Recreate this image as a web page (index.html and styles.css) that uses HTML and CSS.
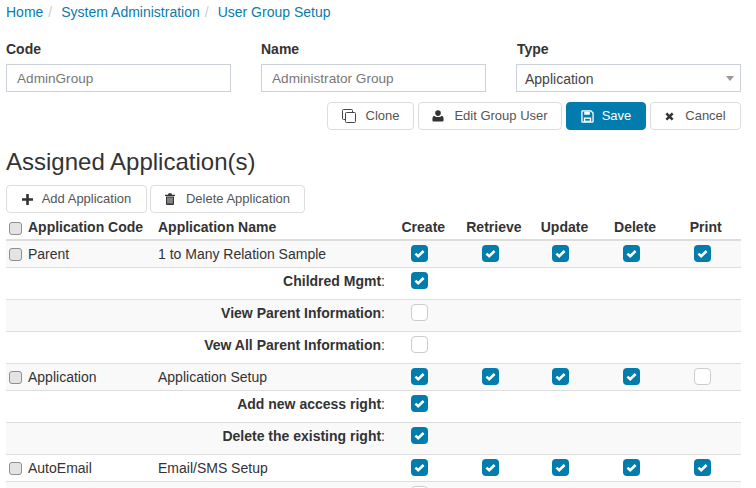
FILE: index.html
```html
<!DOCTYPE html>
<html>
<head>
  <title>User Group Setup</title>
  <link rel="stylesheet" href="styles.css">
</head>
<body>
  <svg class="defs" width="0" height="0">
    <symbol id="tick" viewBox="0 0 17 17">
      <path d="M4.400 8.600l2.800 2.600 5.400-5.200" fill="none" stroke="#fff" stroke-width="2.600"/>
    </symbol>
  </svg>

  <ul class="crumbs">
    <li><a href="#">Home</a></li>
    <li><a href="#">System Administration</a></li>
    <li><a href="#">User Group Setup</a></li>
  </ul>

  <div class="form-row">
    <div class="field">
      <label>Code</label>
      <div class="input">AdminGroup</div>
    </div>
    <div class="field">
      <label>Name</label>
      <div class="input">Administrator Group</div>
    </div>
    <div class="field field-type">
      <label>Type</label>
      <div class="select">Application<span class="caret"></span></div>
    </div>
  </div>

  <div class="actions">
    <button class="btn btn-clone">
      <svg class="icon ic-clone" viewBox="0 0 14 14"><path d="M3.500 10.500h-2a1 1 0 0 1-1-1v-8a1 1 0 0 1 1-1h8a1 1 0 0 1 1 1v2" fill="none" stroke="#444"/><rect x="3.500" y="3.500" width="10" height="10" rx="1" fill="none" stroke="#444"/></svg>
      Clone
    </button>
    <button class="btn btn-edit">
      <svg class="icon ic-user" viewBox="0 0 14 14"><circle cx="7" cy="3.600" r="3.300" fill="#333"/><path d="M2.400 6.600c.9.9 2.700 1.500 4.600 1.500s3.700-.6 4.600-1.500c1.400.4 1.900 1.900 1.900 4.400v1c0 1-.7 1.500-1.500 1.500H2c-.8 0-1.500-.5-1.500-1.500v-1c0-2.500.5-4 1.900-4.400z" fill="#333"/></svg>
      Edit Group User
    </button>
    <button class="btn btn-primary btn-save">
      <svg class="icon ic-save" viewBox="0 0 14 14"><path d="M1.500 1h9.300l2.200 2.200v9.300a.5.500 0 0 1-.5.5h-11a.5.500 0 0 1-.5-.5v-11a.5.500 0 0 1 .5-.5z" fill="none" stroke="#fff" stroke-width="1.400"/><path d="M3.500 1.500h6v3.500h-6zM3 8h8v5H3z" fill="#fff"/><rect x="4.500" y="9.500" width="5" height="2" fill="#017cad"/></svg>
      Save
    </button>
    <button class="btn btn-cancel">
      <svg class="icon ic-cancel" viewBox="0 0 10 10"><path d="M1.500 1.500l7 7M8.500 1.500l-7 7" fill="none" stroke="#333" stroke-width="2.800"/></svg>
      Cancel
    </button>
  </div>

  <h3 class="section-title">Assigned Application(s)</h3>

  <div class="toolbar">
    <button class="btn btn-add">
      <svg class="icon ic-plus" viewBox="0 0 11 11"><path d="M5.500 0v11M0 5.500h11" fill="none" stroke="#333" stroke-width="2.600"/></svg>
      Add Application
    </button>
    <button class="btn btn-delete">
      <svg class="icon ic-trash" viewBox="0 0 10 12"><path d="M0 1.800h10v1.100H0zM3 1.800L3.600.3h2.800L7 1.800" fill="#333"/><path d="M1 3.400h8v7.600a1 1 0 0 1-1 1H2a1 1 0 0 1-1-1z" fill="#333"/><path d="M3 4.500v6M5 4.500v6M7 4.500v6" stroke="#fff" stroke-width=".8"/></svg>
      Delete Application
    </button>
  </div>

  <table class="rights">
    <colgroup>
      <col class="col-code"><col class="col-name">
      <col class="col-flag"><col class="col-flag"><col class="col-flag"><col class="col-flag"><col class="col-flag">
    </colgroup>
    <thead>
      <tr>
        <th><span class="box box-head"></span>Application Code</th>
        <th class="name">Application Name</th>
        <th class="flag">Create</th>
        <th class="flag">Retrieve</th>
        <th class="flag">Update</th>
        <th class="flag">Delete</th>
        <th class="flag">Print</th>
      </tr>
    </thead>
    <tbody>
      <tr class="app odd">
        <td><span class="box"></span>Parent</td>
        <td class="name">1 to Many Relation Sample</td>
        <td class="flag"><span class="chk on"><svg><use href="#tick"/></svg></span></td>
        <td class="flag"><span class="chk on"><svg><use href="#tick"/></svg></span></td>
        <td class="flag"><span class="chk on"><svg><use href="#tick"/></svg></span></td>
        <td class="flag"><span class="chk on"><svg><use href="#tick"/></svg></span></td>
        <td class="flag"><span class="chk on"><svg><use href="#tick"/></svg></span></td>
      </tr>
      <tr class="sub">
        <td class="sub-label" colspan="2"><b>Childred Mgmt</b>:</td>
        <td class="flag"><span class="chk on"><svg><use href="#tick"/></svg></span></td>
        <td colspan="4"></td>
      </tr>
      <tr class="sub odd">
        <td class="sub-label" colspan="2"><b>View Parent Information</b>:</td>
        <td class="flag"><span class="chk"></span></td>
        <td colspan="4"></td>
      </tr>
      <tr class="sub">
        <td class="sub-label" colspan="2"><b>Vew All Parent Information</b>:</td>
        <td class="flag"><span class="chk"></span></td>
        <td colspan="4"></td>
      </tr>
      <tr class="app odd">
        <td><span class="box"></span>Application</td>
        <td class="name">Application Setup</td>
        <td class="flag"><span class="chk on"><svg><use href="#tick"/></svg></span></td>
        <td class="flag"><span class="chk on"><svg><use href="#tick"/></svg></span></td>
        <td class="flag"><span class="chk on"><svg><use href="#tick"/></svg></span></td>
        <td class="flag"><span class="chk on"><svg><use href="#tick"/></svg></span></td>
        <td class="flag"><span class="chk"></span></td>
      </tr>
      <tr class="sub">
        <td class="sub-label" colspan="2"><b>Add new access right</b>:</td>
        <td class="flag"><span class="chk on"><svg><use href="#tick"/></svg></span></td>
        <td colspan="4"></td>
      </tr>
      <tr class="sub odd">
        <td class="sub-label" colspan="2"><b>Delete the existing right</b>:</td>
        <td class="flag"><span class="chk on"><svg><use href="#tick"/></svg></span></td>
        <td colspan="4"></td>
      </tr>
      <tr class="app">
        <td><span class="box"></span>AutoEmail</td>
        <td class="name">Email/SMS Setup</td>
        <td class="flag"><span class="chk on"><svg><use href="#tick"/></svg></span></td>
        <td class="flag"><span class="chk on"><svg><use href="#tick"/></svg></span></td>
        <td class="flag"><span class="chk on"><svg><use href="#tick"/></svg></span></td>
        <td class="flag"><span class="chk on"><svg><use href="#tick"/></svg></span></td>
        <td class="flag"><span class="chk on"><svg><use href="#tick"/></svg></span></td>
      </tr>
      <tr class="sub odd">
        <td class="sub-label" colspan="2"></td>
        <td class="flag"><span class="chk"></span></td>
        <td colspan="4"></td>
      </tr>
    </tbody>
  </table>
</body>
</html>
```
FILE: styles.css
```css
html, body {
  height: 100%;
  overflow: hidden;
}
body {
  font-family: "Liberation Sans", Arial, sans-serif;
  font-size: 14px;
  line-height: 20px;
  color: #333;
  background-color: #fff;
  margin: 0;
  padding: 0 15px 0 6px;
}
.defs {
  display: block;
  height: 0;
}
.crumbs {
  list-style: none;
  display: flex;
  margin: 0;
  padding: 2px 0 0;
  height: 37px;
  box-sizing: border-box;
}
.crumbs li + li::before {
  content: "/";
  color: #ccc;
  padding: 0 9px 0 5px;
}
.crumbs a {
  color: #0a7cac;
  text-decoration: none;
}
.form-row {
  display: grid;
  grid-template-columns: repeat(3, 225px);
  column-gap: 30px;
}
.field label {
  display: block;
  font-weight: bold;
  margin-top: 2px;
  margin-bottom: 5px;
}
.field-type label {
  padding-left: 1px;
}
.input, .select {
  position: relative;
  height: 28px;
  box-sizing: border-box;
  border: 1px solid #ccd0d8;
  padding: 4px 10px 0;
  color: #777;
  font-size: 13.6px;
}
.select {
  color: #444;
  font-size: 14px;
  padding-left: 8px;
}
.caret {
  position: absolute;
  right: 6px;
  top: 11px;
  border-style: solid;
  border-width: 5px 4px 0;
  border-color: #999 transparent transparent;
}
.actions {
  display: flex;
  justify-content: flex-end;
  gap: 4px;
  margin-top: 10px;
}
.btn {
  display: flex;
  align-items: center;
  justify-content: center;
  height: 28px;
  padding: 0;
  font: inherit;
  font-size: 13px;
  color: #555;
  background-color: #fff;
  border: 1px solid #ddd;
  border-radius: 4px;
  box-sizing: border-box;
}
.btn-primary {
  background-color: #017cad;
  border-color: #017cad;
  color: #fff;
}
.btn-clone { width: 87px; }
.btn-edit { width: 144px; }
.btn-save { width: 80px; }
.btn-cancel { width: 91px; }
.btn-add { width: 141px; }
.btn-delete { width: 155px; }
.icon {
  flex: none;
}
.ic-clone { width: 14px; height: 14px; margin-right: 10px; }
.ic-user { width: 12px; height: 12px; margin-right: 10px; }
.ic-save { width: 13px; height: 13px; margin-right: 8px; }
.ic-cancel { width: 9px; height: 9px; margin-right: 11px; }
.ic-plus { width: 11px; height: 11px; margin-right: 9px; }
.ic-trash { width: 10px; height: 12px; margin-right: 11px; }
.section-title {
  font-size: 24px;
  font-weight: normal;
  line-height: 30px;
  margin: 17px 0 8px;
}
.toolbar {
  display: flex;
  gap: 3px;
}
.rights {
  width: 735px;
  border-collapse: collapse;
  table-layout: fixed;
}
.col-code { width: 146px; }
.col-name { width: 236px; }
.col-flag { width: 70.6px; }
.rights th, .rights td {
  padding: 0;
  text-align: left;
  box-sizing: border-box;
}
.rights th {
  height: 27px;
  padding-top: 1px;
  border-bottom: 2px solid #ddd;
}
.rights td {
  border-bottom: 1px solid #ddd;
}
.rights .name {
  padding-left: 6px;
}
.rights th.flag, .rights td.flag {
  text-align: center;
}
.rights td.flag {
  padding-top: 4px;
  line-height: 17px;
  vertical-align: top;
}
.odd td {
  background-color: #f9f9f9;
}
.app td {
  height: 27px;
}
.sub td {
  height: 32px;
}
.sub td.sub-label {
  text-align: right;
  padding-right: 3px;
  padding-top: 3px;
  vertical-align: top;
}
.box {
  display: inline-block;
  width: 11px;
  height: 11px;
  margin: 0 6px 0 3px;
  border: 1px solid #8f8f8f;
  border-radius: 3px;
  background-color: #e4e4e4;
  vertical-align: -2px;
}
.box-head {
  vertical-align: -3px;
}
.chk {
  display: inline-block;
  width: 17px;
  height: 17px;
  margin-right: 7px;
  box-sizing: border-box;
  border: 1px solid #ccc;
  border-radius: 4px;
  background-color: #fff;
  vertical-align: top;
}
.chk.on {
  border: 0;
  background-color: #017cad;
}
.chk svg {
  display: block;
  width: 17px;
  height: 17px;
}
```
